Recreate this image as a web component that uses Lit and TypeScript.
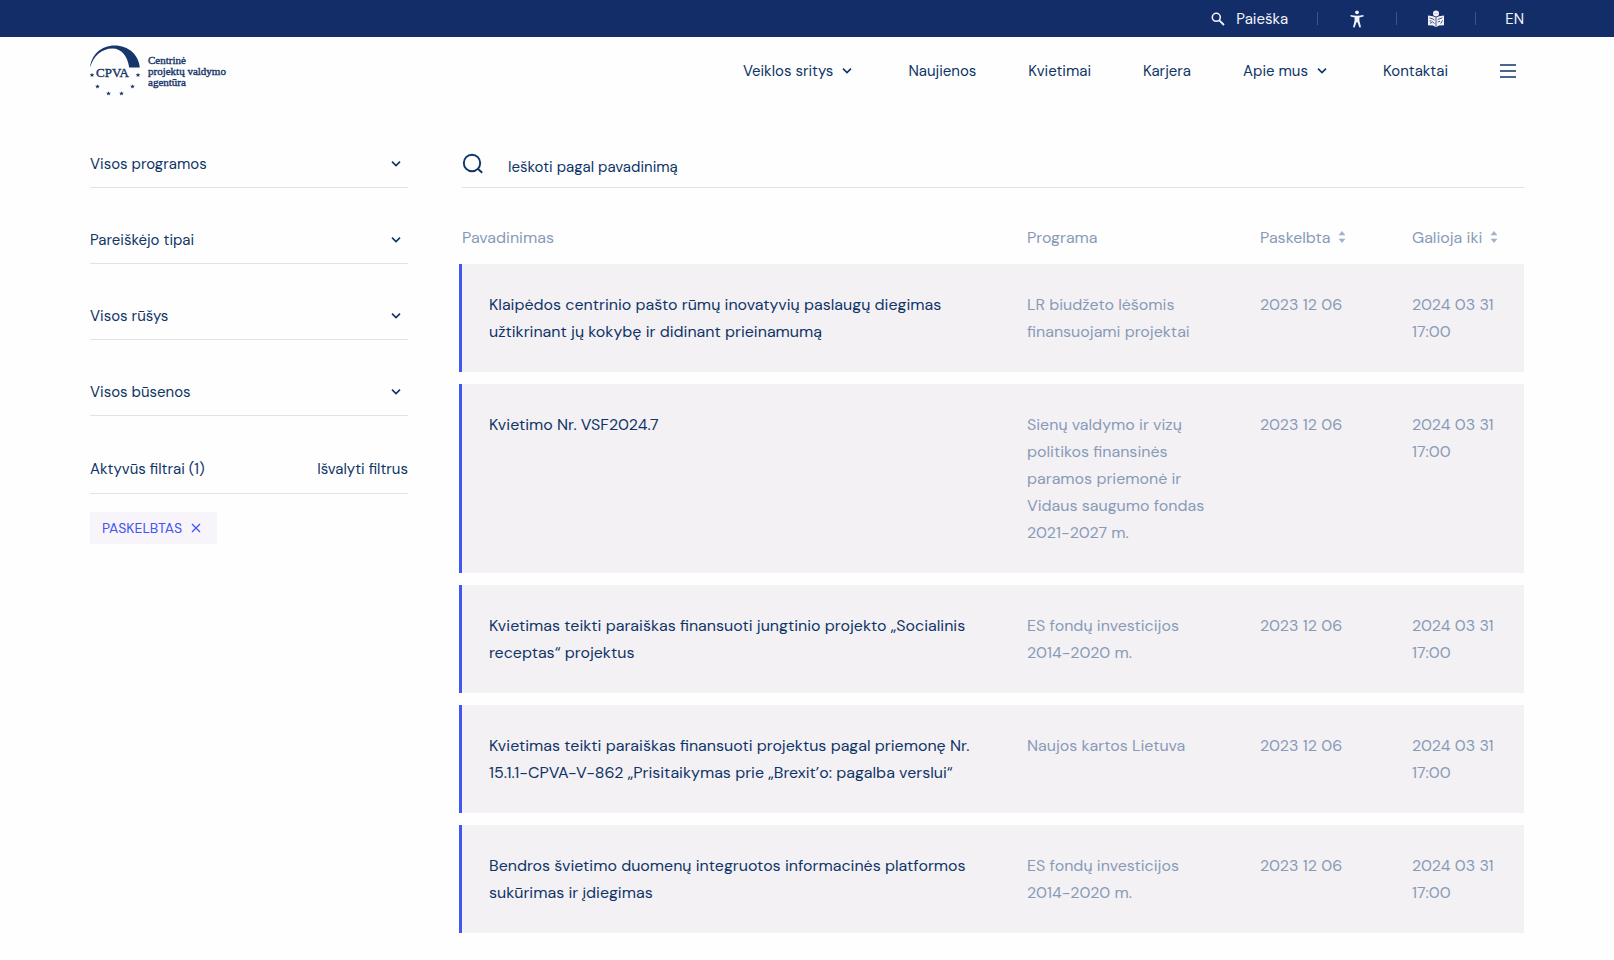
import { LitElement, html, css, svg } from "lit";
import { customElement, state } from "lit/decorators.js";

interface Call {
  title: string;
  programme: string;
  published: string;
  validUntil: string;
}

const CALLS: Call[] = [
  {
    title: "Klaipėdos centrinio pašto rūmų inovatyvių paslaugų diegimas užtikrinant jų kokybę ir didinant prieinamumą",
    programme: "LR biudžeto lėšomis finansuojami projektai",
    published: "2023 12 06",
    validUntil: "2024 03 31 17:00",
  },
  {
    title: "Kvietimo Nr. VSF2024.7",
    programme: "Sienų valdymo ir vizų politikos finansinės paramos priemonė ir Vidaus saugumo fondas 2021-2027 m.",
    published: "2023 12 06",
    validUntil: "2024 03 31 17:00",
  },
  {
    title: "Kvietimas teikti paraiškas finansuoti jungtinio projekto „Socialinis receptas\u201c projektus",
    programme: "ES fondų investicijos 2014-2020 m.",
    published: "2023 12 06",
    validUntil: "2024 03 31 17:00",
  },
  {
    title: "Kvietimas teikti paraiškas finansuoti projektus pagal priemonę Nr. 15.1.1-CPVA-V-862 „Prisitaikymas prie „Brexit\u2019o: pagalba verslui\u201c",
    programme: "Naujos kartos Lietuva",
    published: "2023 12 06",
    validUntil: "2024 03 31 17:00",
  },
  {
    title: "Bendros švietimo duomenų integruotos informacinės platformos sukūrimas ir įdiegimas",
    programme: "ES fondų investicijos 2014-2020 m.",
    published: "2023 12 06",
    validUntil: "2024 03 31 17:00",
  },
];

const FILTERS = ["Visos programos", "Pareiškėjo tipai", "Visos rūšys", "Visos būsenos"];

const NAV = [
  { label: "Veiklos sritys", menu: true },
  { label: "Naujienos", menu: false },
  { label: "Kvietimai", menu: false },
  { label: "Karjera", menu: false },
  { label: "Apie mus", menu: true },
  { label: "Kontaktai", menu: false },
];

const chevron = (cls: string) => html`
  <svg class=${cls} width="10" height="8" viewBox="0 0 10 8" aria-hidden="true">
    <path d="M1 1.6 5 5.6 9 1.6" fill="none" stroke="currentColor" stroke-width="1.6" />
  </svg>`;

const sortArrows = html`
  <svg width="8" height="14" viewBox="0 0 8 14" aria-hidden="true">
    <path d="M4 1 7.4 5.2H.6zM4 13 .6 8.8h6.8z" fill="currentColor" />
  </svg>`;

const star = (x: number, y: number) => svg`
  <path transform="translate(${x} ${y}) scale(1.15)" fill="currentColor"
    d="M0-2 .55-.65 2-.6.9.35 1.25 1.75 0 .95-1.25 1.75-.9.35-2-.6-.55-.65z" />`;

const logoMark = html`
  <svg class="mark" width="52" height="52" viewBox="0 0 52 52" aria-hidden="true">
    <path fill="currentColor"
      d="M.2 22.5C1.2 10 11.2.6 24.6.6 38.600.6 48.800 10 49.800 22.500H39.200C37.600 11.500 31.500 3.600 22.500 3.600 11.500 3.600 3.200 11.500.2 22.500Z" />
    <text class="mark-text" x="6" y="32">CPVA</text>
    ${[[2, 30], [48, 30], [7.5, 41.5], [42.5, 41.5], [18.5, 48.5], [31.5, 48.5]].map(([x, y]) => star(x, y))}
  </svg>`;

@customElement("app-root")
export class AppRoot extends LitElement {
  @state() private activeFilters = ["Paskelbtas"];

  static styles = css`
    :host {
      display: block;
      min-height: 100vh;
      background: #fefefe;
      color: #0f3567;
      font-family: "DM Sans", "Inter", sans-serif;
      font-size: 15px;
      line-height: 20px;
      --muted: #879bb8;
      --line: #e2e2ea;
      --accent: #4356f2;
    }
    * { box-sizing: border-box; }
    a { color: inherit; text-decoration: none; }
    button, select, input {
      font: inherit;
      color: inherit;
      background: none;
      border: 0;
      padding: 0;
      margin: 0;
      border-radius: 0;
    }
    button, select { cursor: pointer; }
    svg { display: block; flex: none; }
    .wrap { padding: 0 90px; }

    .topbar {
      display: flex;
      align-items: center;
      justify-content: flex-end;
      gap: 29px;
      height: 37px;
      background: #122d67;
      color: #f3f2fa;
    }
    .topbar-search { display: flex; align-items: center; gap: 11px; }
    .sep { width: 1px; height: 13px; background: #3f5588; }
    .topbar-icon { display: flex; justify-content: center; width: 20px; }

    .header {
      display: flex;
      align-items: center;
      justify-content: space-between;
      height: 68px;
    }
    .logo { display: flex; align-items: center; gap: 6px; color: #17376a; }
    .mark-text {
      font: 13px "Liberation Serif", serif;
      fill: currentColor;
      stroke: currentColor;
      stroke-width: .4px;
    }
    .logo-name {
      font: 11px/11px "Liberation Serif", serif;
      -webkit-text-stroke: .4px currentColor;
      white-space: nowrap;
    }
    .nav { display: flex; align-items: center; gap: 52px; }
    .nav-link { display: flex; align-items: center; gap: 9px; white-space: nowrap; }
    .nav-chevron { margin-right: 4px; }
    .menu { padding-right: 8px; }

    .main {
      display: grid;
      grid-template-columns: minmax(240px, 318px) minmax(0, 1fr);
      gap: 51px;
      align-items: start;
      padding-top: 35px;
      padding-bottom: 27px;
    }
    .filter {
      display: grid;
      align-items: center;
      margin-bottom: 28px;
      border-bottom: 1px solid var(--line);
    }
    .filter-select {
      grid-area: 1 / 1;
      appearance: none;
      width: 100%;
      height: 47px;
    }
    .filter-chevron {
      grid-area: 1 / 1;
      justify-self: end;
      margin-right: 7px;
      pointer-events: none;
    }
    .active {
      display: flex;
      align-items: center;
      justify-content: space-between;
      height: 50px;
      border-bottom: 1px solid var(--line);
    }
    .chips { display: flex; gap: 8px; margin-top: 18px; }
    .chip {
      display: flex;
      align-items: center;
      gap: 9px;
      height: 32px;
      padding: 0 16px 0 12px;
      background: #f7f5f9;
      color: var(--accent);
      font-size: 14px;
      text-transform: uppercase;
    }

    .search {
      display: flex;
      align-items: center;
      gap: 24px;
      margin-left: 3px;
      border-bottom: 1px solid var(--line);
    }
    .search-input {
      flex: 1;
      min-width: 0;
      height: 47px;
      padding-top: 6px;
      outline: 0;
    }
    .search-input::placeholder { color: inherit; opacity: 1; }

    .calls {
      width: 100%;
      margin-top: 22px;
      border-collapse: separate;
      border-spacing: 0 12px;
      table-layout: fixed;
      font-size: 16px;
      line-height: 27px;
      color: var(--muted);
    }
    .col-programme { width: 233px; }
    .col-published { width: 152px; }
    .col-valid { width: 112px; }
    th { height: 30px; padding: 0; font-weight: 400; text-align: left; }
    .th-title { padding-left: 3px; }
    .sort { display: flex; align-items: center; gap: 8px; white-space: nowrap; }
    .sort svg { color: #a3b1ca; }
    td { padding: 27px 30px 27px 0; vertical-align: top; background: #f4f1f5; }
    .title {
      padding-left: 27px;
      padding-right: 50px;
      border-left: 3px solid var(--accent);
      color: #0f3567;
    }
    .programme { padding-right: 40px; }
    .valid { padding-right: 20px; }
  `;

  private clearFilters() {
    this.activeFilters = [];
  }

  private removeFilter(name: string) {
    this.activeFilters = this.activeFilters.filter((f) => f !== name);
  }

  private renderTopbar() {
    return html`
      <div class="topbar wrap">
        <a class="topbar-search" href="#paieska">
          <svg width="14" height="14" viewBox="0 0 14 14" aria-hidden="true">
            <circle cx="5.300" cy="5.300" r="4" fill="none" stroke="currentColor" stroke-width="1.600" />
            <path d="m8.300 8.300 4.700 4.700" stroke="currentColor" stroke-width="1.900" />
          </svg>
          Paieška
        </a>
        <span class="sep"></span>
        <a class="topbar-icon" href="#pritaikymas" aria-label="Pritaikymas neįgaliesiems">
          <svg width="14" height="18" viewBox="0 0 14 18" aria-hidden="true">
            <circle cx="7" cy="2.300" r="1.900" fill="currentColor" />
            <path fill="currentColor"
              d="M.5 4.900C4.700 5.900 9.300 5.900 13.500 4.900V6.600L9.400 7.500V10.500L11 17.200 9.400 17.600 7.500 12.300H6.500L4.600 17.600 3 17.200 4.600 10.500V7.500L.5 6.600Z" />
          </svg>
        </a>
        <span class="sep"></span>
        <a class="topbar-icon" href="#lengvai" aria-label="Lengvai suprantama kalba">
          <svg width="18" height="18" viewBox="0 0 18 18" aria-hidden="true">
            <circle cx="9" cy="3.500" r="3" fill="currentColor" />
            <path fill="currentColor" d="M1 5.500 6 6.300 9 7.800 12 6.300 17 5.500V15.300L12 15.500 9 17.200 6 15.500 1 15.300Z" />
            <g fill="none" stroke="#122d67" stroke-width=".8">
              <path d="M9 8V16.800M2.500 8 5 8.600M5 8.600 7.500 10M2.500 11 4.500 10.800M3 13.500 5.500 11.800 7.500 13.500M10.800 9.500 15.400 7.700M10.800 12 13 11.200M13.800 13.500 15.500 10.500" />
            </g>
            <circle cx="8" cy="3.300" r=".4" fill="#122d67" />
            <circle cx="10" cy="3.300" r=".4" fill="#122d67" />
          </svg>
        </a>
        <span class="sep"></span>
        <a href="#en">EN</a>
      </div>`;
  }

  private renderHeader() {
    return html`
      <header class="header wrap">
        <a class="logo" href="#" aria-label="CPVA">
          ${logoMark}
          <span class="logo-name">Centrinė<br />projektų valdymo<br />agentūra</span>
        </a>
        <nav class="nav">
          ${NAV.map((n) => html`
            <a class="nav-link" href="#">${n.label}${n.menu ? chevron("nav-chevron") : ""}</a>`)}
          <button class="menu" aria-label="Meniu">
            <svg width="16" height="14" viewBox="0 0 16 14" aria-hidden="true">
              <path d="M0 1h16M0 7h16M0 13h16" stroke="currentColor" stroke-width="1.300" />
            </svg>
          </button>
        </nav>
      </header>`;
  }

  private renderFilters() {
    return html`
      <aside>
        ${FILTERS.map((f) => html`
          <div class="filter">
            <select class="filter-select" aria-label=${f}><option>${f}</option></select>
            ${chevron("filter-chevron")}
          </div>`)}
        <div class="active">
          <span>Aktyvūs filtrai (${this.activeFilters.length})</span>
          <button @click=${this.clearFilters}>Išvalyti filtrus</button>
        </div>
        <div class="chips">
          ${this.activeFilters.map((f) => html`
            <button class="chip" @click=${() => this.removeFilter(f)}>
              ${f}
              <svg width="10" height="10" viewBox="0 0 10 10" aria-hidden="true">
                <path d="m1 1 8 8M9 1 1 9" stroke="currentColor" stroke-width="1.300" />
              </svg>
            </button>`)}
        </div>
      </aside>`;
  }

  private renderCalls() {
    return html`
      <section>
        <div class="search">
          <svg width="22" height="22" viewBox="0 0 22 22" aria-hidden="true">
            <circle cx="10" cy="10" r="8.200" fill="none" stroke="currentColor" stroke-width="1.900" />
            <path d="m15.800 15.800 4.400 4" stroke="currentColor" stroke-width="1.900" />
          </svg>
          <input class="search-input" type="text" aria-label="Ieškoti pagal pavadinimą" placeholder="Ieškoti pagal pavadinimą" />
        </div>
        <table class="calls">
          <colgroup>
            <col />
            <col class="col-programme" />
            <col class="col-published" />
            <col class="col-valid" />
          </colgroup>
          <thead>
            <tr>
              <th class="th-title">Pavadinimas</th>
              <th>Programa</th>
              <th><button class="sort">Paskelbta ${sortArrows}</button></th>
              <th><button class="sort">Galioja iki ${sortArrows}</button></th>
            </tr>
          </thead>
          <tbody>
            ${CALLS.map((c) => html`
              <tr>
                <td class="title"><a href="#">${c.title}</a></td>
                <td class="programme">${c.programme}</td>
                <td>${c.published}</td>
                <td class="valid">${c.validUntil}</td>
              </tr>`)}
          </tbody>
        </table>
      </section>`;
  }

  render() {
    return html`
      ${this.renderTopbar()}
      ${this.renderHeader()}
      <main class="main wrap">
        ${this.renderFilters()}
        ${this.renderCalls()}
      </main>`;
  }
}
